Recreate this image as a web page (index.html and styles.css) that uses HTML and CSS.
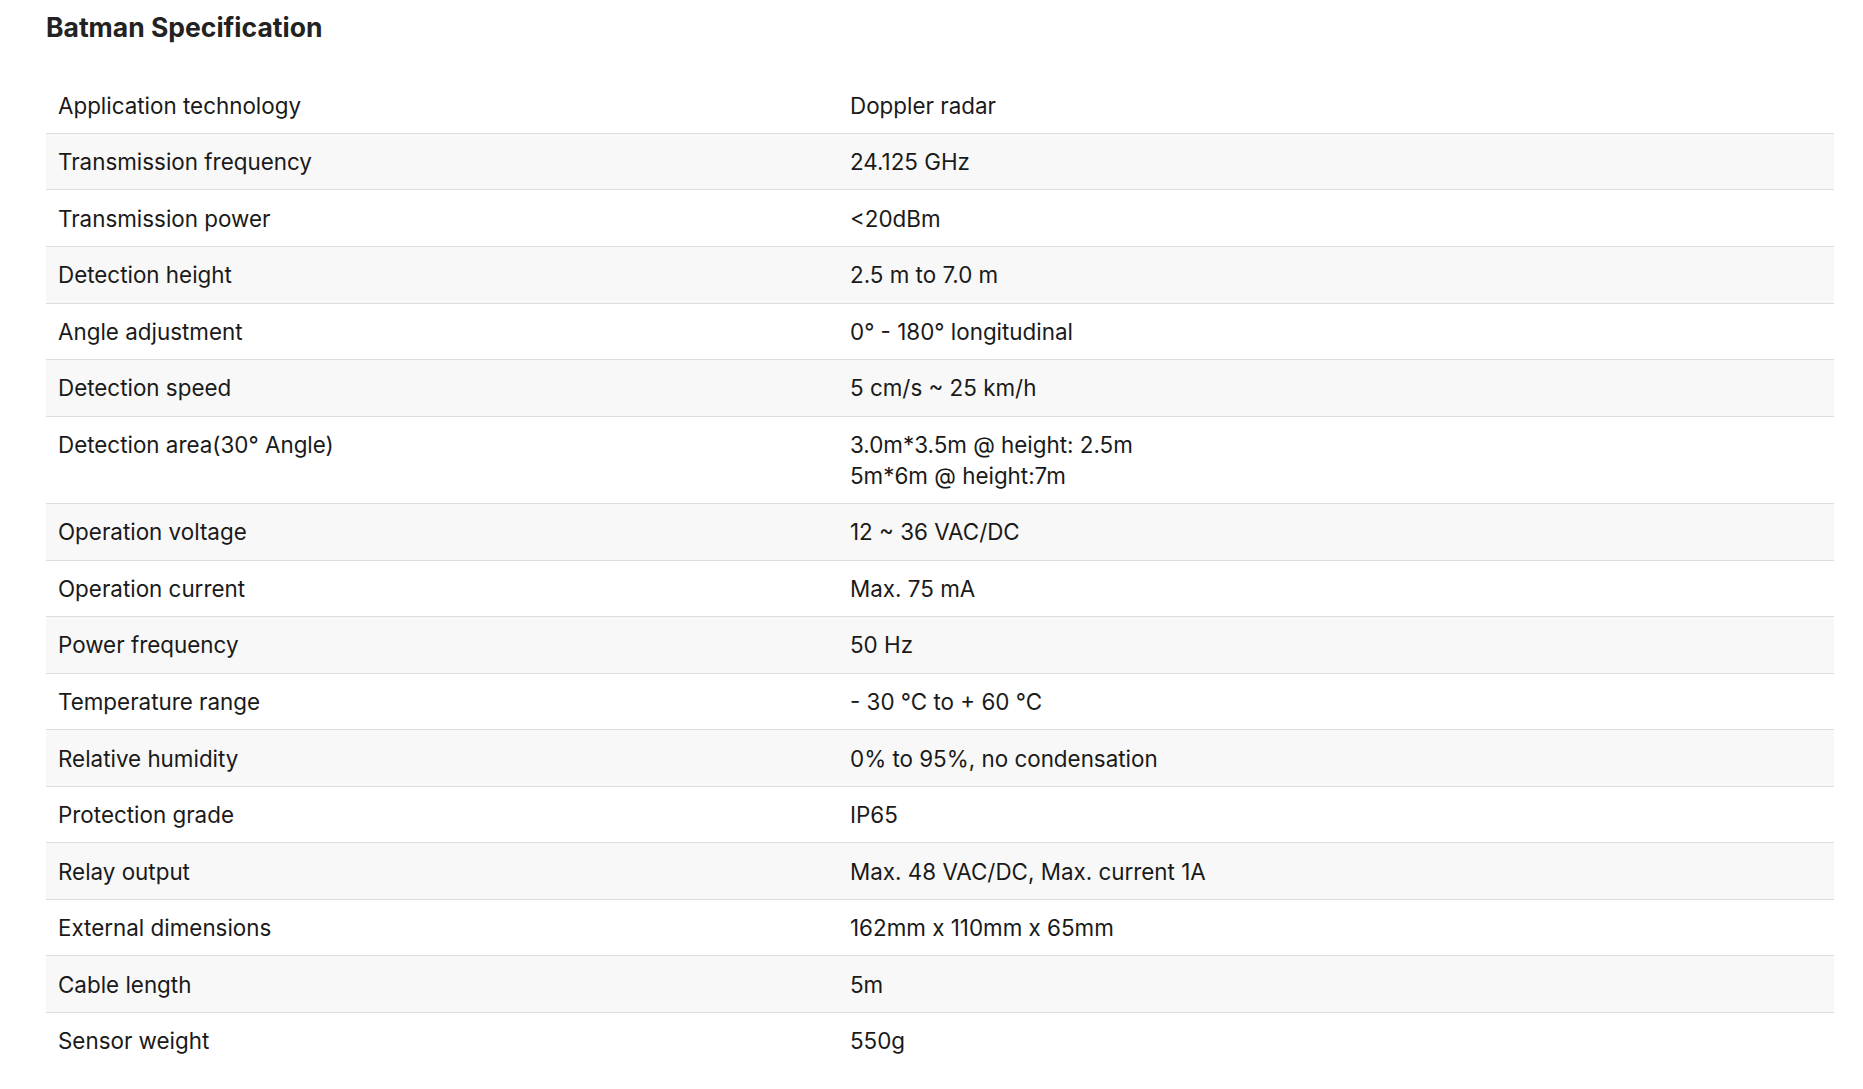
FILE: index.html
```html
<!DOCTYPE html>
<html lang="en">
<head>
<meta charset="utf-8">
<title>Batman Specification</title>
<link rel="stylesheet" href="styles.css">
</head>
<body>
<section class="spec">
  <h2 class="spec-title">Batman Specification</h2>
  <div class="spec-table">
    <div class="row"><div class="cell key">Application technology</div><div class="cell val">Doppler radar</div></div>
    <div class="row"><div class="cell key">Transmission frequency</div><div class="cell val">24.125 GHz</div></div>
    <div class="row"><div class="cell key">Transmission power</div><div class="cell val">&lt;20dBm</div></div>
    <div class="row"><div class="cell key">Detection height</div><div class="cell val">2.5 m to 7.0 m</div></div>
    <div class="row"><div class="cell key">Angle adjustment</div><div class="cell val">0° - 180° longitudinal</div></div>
    <div class="row"><div class="cell key">Detection speed</div><div class="cell val">5 cm/s ~ 25 km/h</div></div>
    <div class="row"><div class="cell key">Detection area(30° Angle)</div><div class="cell val">3.0m*3.5m @ height: 2.5m<br>5m*6m @ height:7m</div></div>
    <div class="row"><div class="cell key">Operation voltage</div><div class="cell val">12 ~ 36 VAC/DC</div></div>
    <div class="row"><div class="cell key">Operation current</div><div class="cell val">Max. 75 mA</div></div>
    <div class="row"><div class="cell key">Power frequency</div><div class="cell val">50 Hz</div></div>
    <div class="row"><div class="cell key">Temperature range</div><div class="cell val">- 30 °C to + 60 °C</div></div>
    <div class="row"><div class="cell key">Relative humidity</div><div class="cell val">0% to 95%, no condensation</div></div>
    <div class="row"><div class="cell key">Protection grade</div><div class="cell val">IP65</div></div>
    <div class="row"><div class="cell key">Relay output</div><div class="cell val">Max. 48 VAC/DC, Max. current 1A</div></div>
    <div class="row"><div class="cell key">External dimensions</div><div class="cell val">162mm x 110mm x 65mm</div></div>
    <div class="row"><div class="cell key">Cable length</div><div class="cell val">5m</div></div>
    <div class="row"><div class="cell key">Sensor weight</div><div class="cell val">550g</div></div>
  </div>
</section>
</body>
</html>
```

FILE: styles.css
```css
html, body {
  margin: 0;
  padding: 0;
  background: #ffffff;
}

body {
  font-family: Inter, "Noto Sans", "Liberation Sans", sans-serif;
  color: #1a1a1a;
}

.spec {
  padding: 0 29px 0 46px;
}

.spec-title {
  margin: 0;
  padding-top: 9px;
  font-size: 26.5px;
  line-height: 36px;
  font-weight: 700;
  color: #222222;
}

.spec-table {
  margin-top: 32.4px;
  display: flex;
  flex-direction: column;
}

.row {
  display: grid;
  grid-template-columns: 792px 1fr;
  border-top: 1px solid #dddddd;
}

.row:first-child {
  border-top: none;
}

.row:nth-child(even) {
  background: #f8f8f8;
}

.cell {
  padding: 12.28px 12px;
  font-size: 22.4px;
  line-height: 31px;
}
```
